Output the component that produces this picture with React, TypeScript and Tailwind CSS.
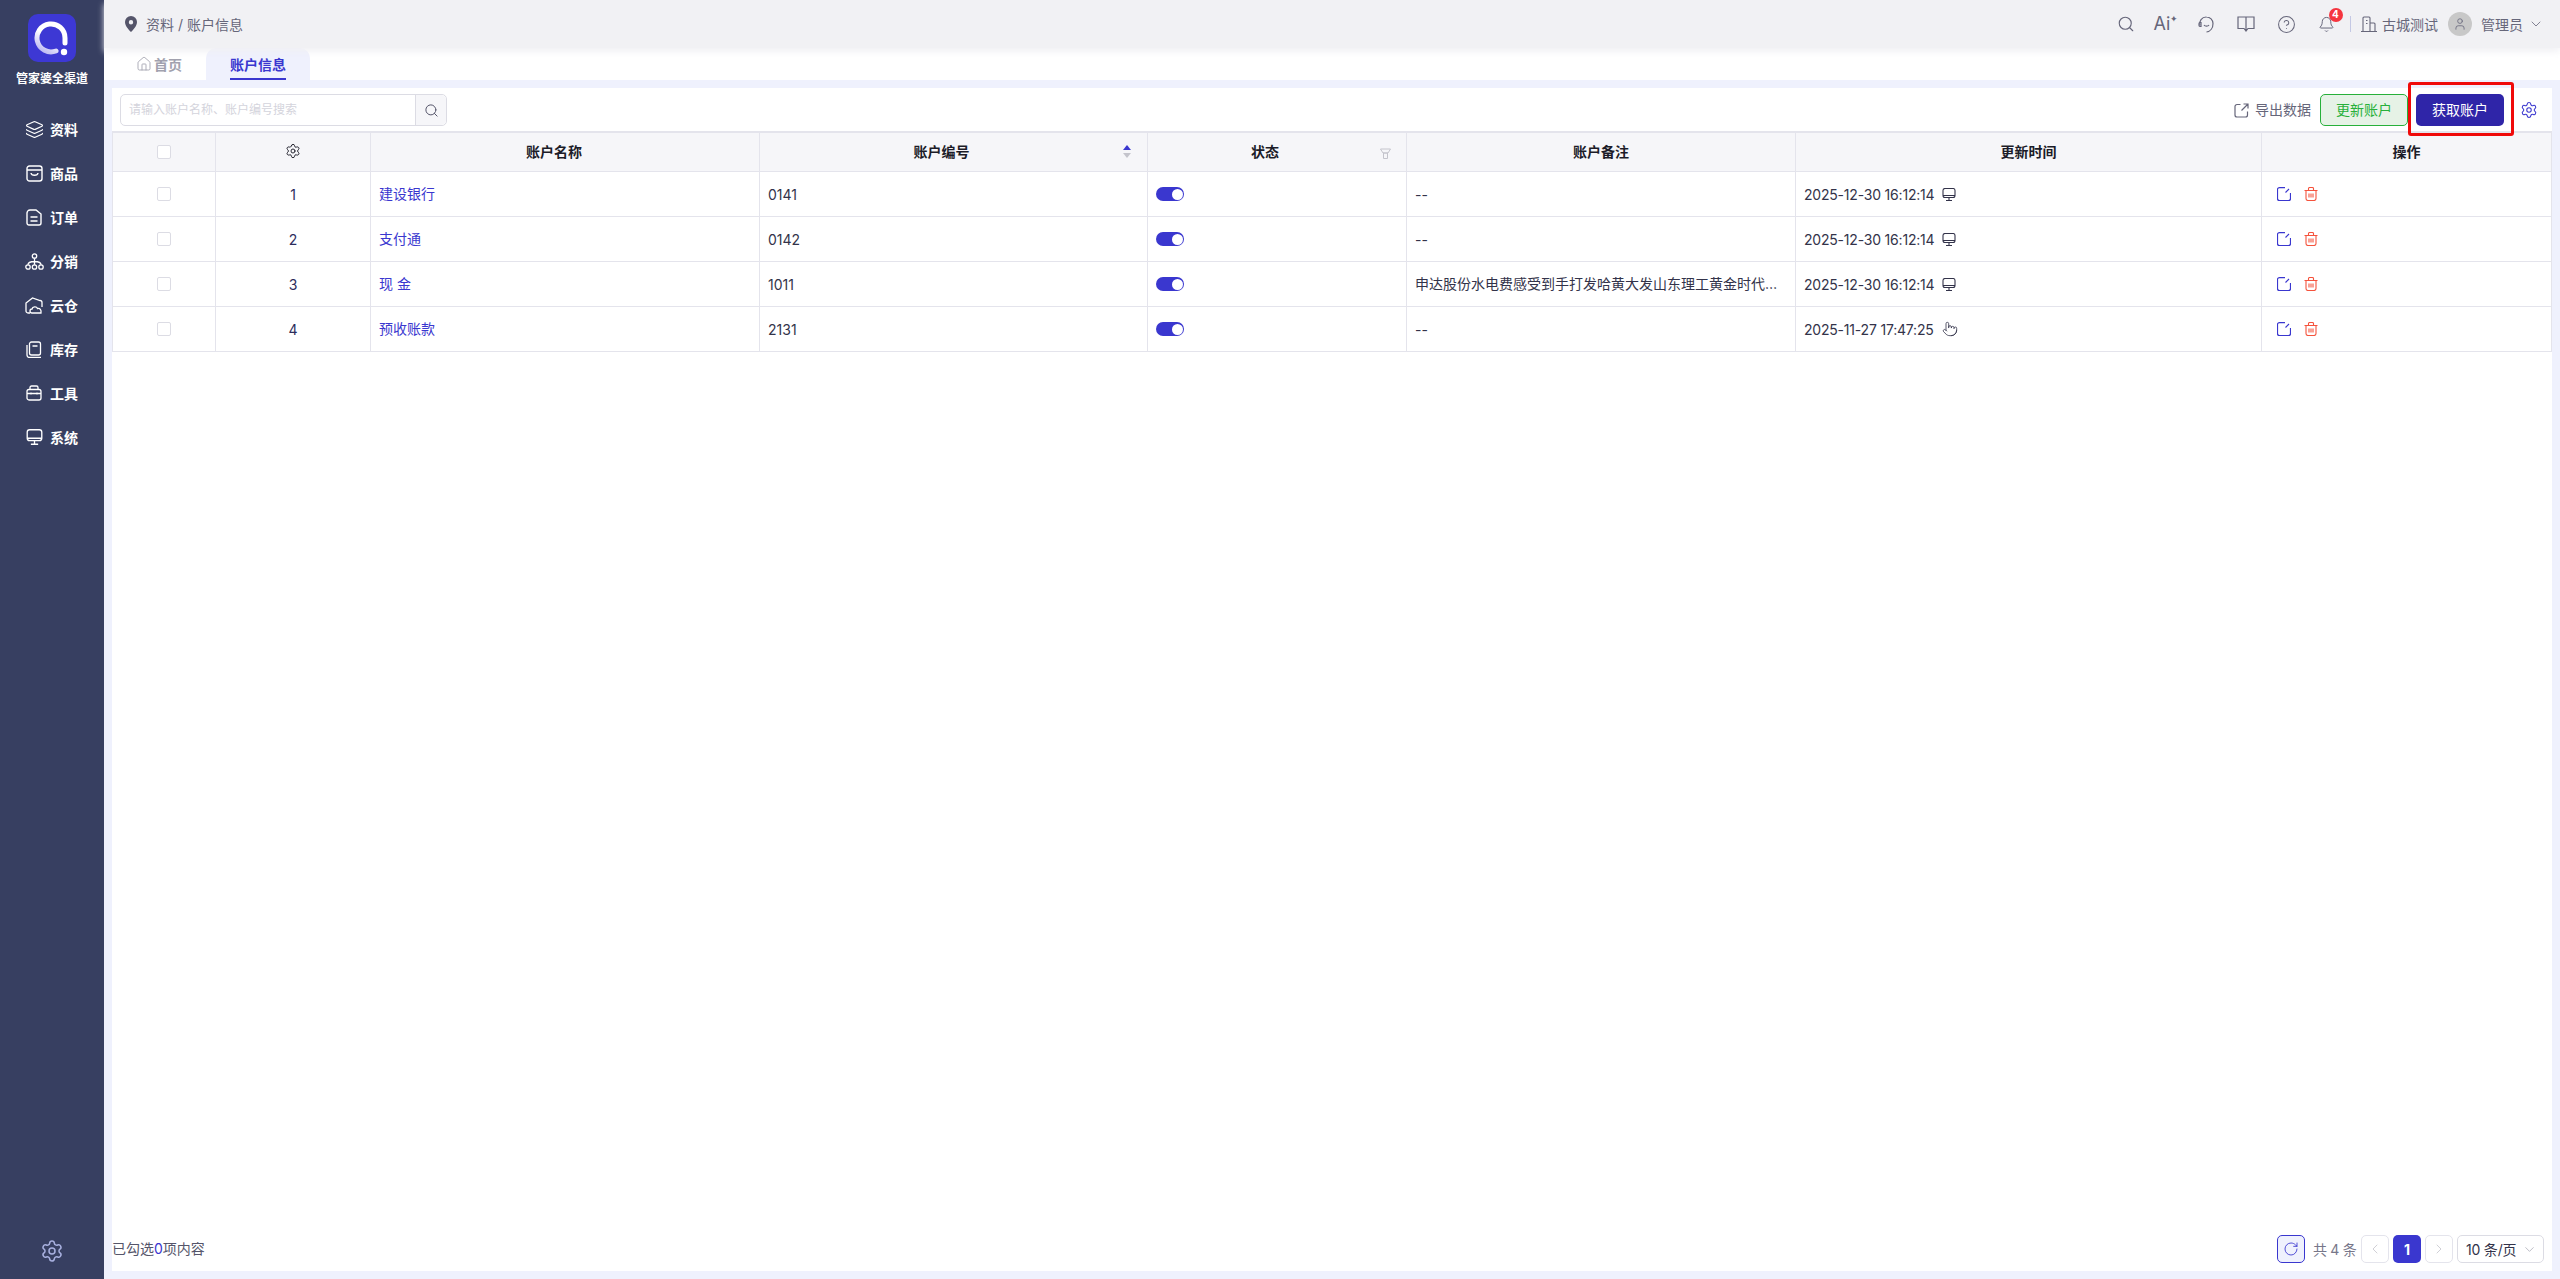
import {
  Bell,
  ChevronDown,
  ChevronLeft,
  ChevronRight,
  CircleHelp,
  House,
  Layers,
  Pointer,
  RotateCw,
  Search,
  Settings,
  User,
} from "lucide-react";

const FONT = "font-['Inter','Noto_Sans_CJK_SC',sans-serif]";

function Shop() {
  return (
    <svg width="17" height="17" viewBox="0 0 17 17" fill="none" stroke="currentColor" strokeWidth="1.4">
      <rect x="1" y="1" width="15" height="15" rx="2.5" />
      <path d="M1 5h15M5 8c.5 3 6.500 3 7 0" />
    </svg>
  );
}

function Doc() {
  return (
    <svg width="16" height="17" viewBox="0 0 16 17" fill="none" stroke="currentColor" strokeWidth="1.4">
      <path d="M4 1h6l5 4v9a2 2 0 0 1-2 2H3a2 2 0 0 1-2-2V4a3 3 0 0 1 3-3z" />
      <path d="M4.500 8h7M4.500 12h7" />
    </svg>
  );
}

function Branches() {
  return (
    <svg width="19" height="17" viewBox="0 0 19 17" fill="none" stroke="currentColor" strokeWidth="1.300">
      <circle cx="9.500" cy="3" r="2.200" />
      <circle cx="3" cy="14" r="2.200" />
      <circle cx="9.500" cy="14" r="2.200" />
      <circle cx="16" cy="14" r="2.200" />
      <path d="M9.500 5.200v6.600M3 11.800c0-3 3-3.300 6.500-3.300s6.500.3 6.500 3.300" />
    </svg>
  );
}

function CloudHouse() {
  return (
    <svg width="18" height="17" viewBox="0 0 18 17" fill="none" stroke="currentColor" strokeWidth="1.300">
      <path d="M5 16H3a2 2 0 0 1-2-2V6l6.500-5L15 3.500a2 2 0 0 1 2 2V10" />
      <path d="M7 16a2 2 0 0 1 0-4c.5-2.500 4.500-3 5.500-.5 2.500-.5 4 1.500 3.500 4.500z" />
    </svg>
  );
}

function Stock() {
  return (
    <svg width="16" height="17" viewBox="0 0 16 17" fill="none" stroke="currentColor" strokeWidth="1.300">
      <rect x="3.500" y="1" width="11" height="13" rx="2" />
      <path d="M6.500 5h5M1 4v10a2.500 2.500 0 0 0 2.500 2.500H15" />
    </svg>
  );
}

function Toolbox() {
  return (
    <svg width="16" height="16" viewBox="0 0 16 16" fill="none" stroke="currentColor" strokeWidth="1.300">
      <rect x="1" y="4.500" width="14" height="10.500" rx="2" />
      <path d="M4 4.500V2.500A1.500 1.500 0 0 1 5.500 1h5A1.500 1.500 0 0 1 12 2.500v2M1 8.500h14M5 7.500v2M11 7.500v2" />
    </svg>
  );
}

function Screen({ w, h }: { w: number; h: number }) {
  return (
    <svg width={w} height={h} viewBox="0 0 14 13" fill="none" stroke="currentColor" strokeWidth="1.100">
      <rect x="1" y=".5" width="12" height="9" rx="2" />
      <path d="M1 7.500h12M7 9.500v3M4 12.500h6" />
    </svg>
  );
}

function HeadsetSmile() {
  return (
    <svg width="17" height="17" viewBox="0 0 17 17" fill="none" stroke="currentColor" strokeWidth="1.200">
      <path d="M2 9.500A6.500 6.500 0 0 1 8.500 1 6.500 6.500 0 0 1 15 7.500c0 4.500-2.500 8-6.500 8.500" />
      <path d="M2 6.500h1v4H2a1.200 1.200 0 0 1-1-1.200V7.700A1.200 1.200 0 0 1 2 6.500zM6 9c1 1.500 4 1.500 5 0" />
    </svg>
  );
}

function Book() {
  return (
    <svg width="18" height="16" viewBox="0 0 18 16" fill="none" stroke="currentColor" strokeWidth="1.200">
      <path d="M1 1h16v11.500h-6L9 15l-2-2.500H1zM9 1v14" />
    </svg>
  );
}

function Building() {
  return (
    <svg width="16" height="16" viewBox="0 0 16 16" fill="none" stroke="currentColor" strokeWidth="1.100">
      <path d="M0 15.500h16M2 15.500V2a1 1 0 0 1 1-1h5a1 1 0 0 1 1 1v13.500M9 7h4a1 1 0 0 1 1 1v7.500M5 4.500h1.500M5 7.500h1.500" />
    </svg>
  );
}

function Funnel() {
  return (
    <svg width="11" height="11" viewBox="0 0 11 11" fill="none" stroke="#c4c4cc" strokeWidth="1">
      <path d="M.5 1h10L8 5H3zM3 5h5M3.500 5v5.500h4V5" />
    </svg>
  );
}

function Export() {
  return (
    <svg width="15" height="15" viewBox="0 0 15 15" fill="none" stroke="currentColor" strokeWidth="1.200">
      <path d="M6.500 1.500H3a2 2 0 0 0-2 2V12a2 2 0 0 0 2 2h8.500a2 2 0 0 0 2-2V8.500M9.500 1h4.500v4.500M14 1L7.500 7.500" />
    </svg>
  );
}

function Edit() {
  return (
    <svg width="14" height="14" viewBox="0 0 14 14" fill="none" stroke="#3a37cf" strokeWidth="1.200">
      <path d="M8 .6H2.500a2 2 0 0 0-2 2v9a2 2 0 0 0 2 2h9a2 2 0 0 0 2-2V6M8.500 5.500l3.500-3.500" />
    </svg>
  );
}

function Trash() {
  return (
    <svg width="14" height="14" viewBox="0 0 14 14" fill="none" stroke="#f5533d" strokeWidth="1.100">
      <path d="M.5 3.500h13M4.500 3.500V1.500a1 1 0 0 1 1-1h3a1 1 0 0 1 1 1v2M2 3.500v8a2 2 0 0 0 2 2h6a2 2 0 0 0 2-2v-8M5 6.500v4M7 6.500v4M9 6.500v4" />
    </svg>
  );
}

const nav = [
  { label: "资料", icon: <Layers size={19} strokeWidth={1.5} /> },
  { label: "商品", icon: <Shop /> },
  { label: "订单", icon: <Doc /> },
  { label: "分销", icon: <Branches /> },
  { label: "云仓", icon: <CloudHouse /> },
  { label: "库存", icon: <Stock /> },
  { label: "工具", icon: <Toolbox /> },
  { label: "系统", icon: <Screen w={17} h={16} /> },
];

const rows = [
  { no: 1, name: "建设银行", code: "0141", note: "--", time: "2025-12-30 16:12:14", hand: false },
  { no: 2, name: "支付通", code: "0142", note: "--", time: "2025-12-30 16:12:14", hand: false },
  {
    no: 3,
    name: "现 金",
    code: "1011",
    note: "申达股份水电费感受到手打发哈黄大发山东理工黄金时代发哈黄金时代",
    time: "2025-12-30 16:12:14",
    hand: false,
  },
  { no: 4, name: "预收账款", code: "2131", note: "--", time: "2025-11-27 17:47:25", hand: true },
];

const cols = "grid-cols-[103px_155px_389px_388px_259px_389px_466px_290px]";

function Check() {
  return <div className="h-[14px] w-[14px] rounded-[2px] border border-[#dcdce4] bg-white" />;
}

function Sidebar() {
  return (
    <aside className="flex h-full w-[104px] shrink-0 flex-col items-center bg-[#373f61] text-white">
      <div className="mt-[14px] flex h-[48px] w-[48px] items-center justify-center rounded-[10px] bg-[#3d38d4]">
        <svg width="36" height="36" viewBox="0 0 36 36" fill="none">
          <defs>
            <linearGradient id="q" x1="0" y1="1" x2="0.6" y2="0">
              <stop offset="0" stopColor="#b3aef0" />
              <stop offset="0.6" stopColor="#ffffff" />
            </linearGradient>
          </defs>
          <path d="M31 23V18A14 14 0 1 0 22 31" stroke="url(#q)" strokeWidth="5" strokeLinecap="round" />
          <circle cx="30" cy="32" r="3.200" fill="#fff" />
        </svg>
      </div>
      <div className="mt-[8px] text-[12px] leading-[18px] font-bold">管家婆全渠道</div>
      <nav className="mt-[19px] flex w-full flex-col">
        {nav.map((n) => (
          <div key={n.label} className="flex h-[44px] items-center">
            <div className="flex w-[50px] justify-center pl-[18px]">{n.icon}</div>
            <span className="text-[14px] font-bold">{n.label}</span>
          </div>
        ))}
      </nav>
      <div className="mt-auto mb-[16px] text-[#a8b0df]">
        <Settings size={24} strokeWidth={1.5} />
      </div>
    </aside>
  );
}

function TopIcon({ children }: { children: React.ReactNode }) {
  return <div className="flex w-[40px] justify-center">{children}</div>;
}

function Topbar() {
  return (
    <header className="relative z-10 flex h-[48px] shrink-0 items-center bg-[#f1f1f4] pr-[16px] pl-[20px] text-[14px] text-[#66667a] shadow-[0_4px_6px_rgba(241,241,244,0.9)]">
      <svg width="14" height="16" viewBox="0 0 14 16">
        <path
          fillRule="evenodd"
          d="M7 0a6 6 0 0 1 6 6c0 4-4 8-6 10-2-2-6-6-6-10a6 6 0 0 1 6-6zm0 4a2.200 2.200 0 1 0 0 4.400A2.200 2.200 0 0 0 7 4z"
          fill="#55556a"
        />
      </svg>
      <span className="ml-[8px]">资料 / 账户信息</span>
      <div className="ml-auto flex items-center">
        <TopIcon>
          <Search size={18} strokeWidth={1.5} />
        </TopIcon>
        <TopIcon>
          <span className="flex items-start text-[18px] leading-[20px]">
            Ai<span className="text-[9px] leading-[10px]">✦</span>
          </span>
        </TopIcon>
        <TopIcon>
          <HeadsetSmile />
        </TopIcon>
        <TopIcon>
          <Book />
        </TopIcon>
        <TopIcon>
          <CircleHelp size={19} strokeWidth={1.3} />
        </TopIcon>
        <TopIcon>
          <div className="relative">
            <Bell size={17} strokeWidth={1.4} />
            <span className="absolute -top-[8px] -right-[8px] flex h-[14px] w-[14px] items-center justify-center rounded-full bg-[#f5353f] text-[10px] font-bold text-white">
              4
            </span>
          </div>
        </TopIcon>
        <div className="mr-[10px] ml-[4px] h-[16px] w-px bg-[#c4c8e4]" />
        <Building />
        <span className="ml-[5px]">古城测试</span>
        <div className="ml-[10px] flex h-[24px] w-[24px] items-center justify-center rounded-full bg-[#c8c8c8]">
          <User size={14} strokeWidth={1.4} />
        </div>
        <span className="ml-[9px]">管理员</span>
        <ChevronDown size={16} strokeWidth={1.2} className="ml-[5px]" />
      </div>
    </header>
  );
}

function Tabs() {
  return (
    <div className="flex h-[32px] shrink-0 items-stretch bg-white pl-[32px] text-[14px] font-bold">
      <div className="flex w-[70px] items-center gap-[2px] text-[#a1a1ae]">
        <House size={16} strokeWidth={1.3} />
        首页
      </div>
      <div className="relative flex w-[104px] items-center justify-center rounded-t-[10px] bg-[#eff1fd] text-[#3a37cf]">
        账户信息
        <span className="absolute bottom-0 left-[24px] h-[2px] w-[56px] bg-[#3a37cf]" />
      </div>
    </div>
  );
}

function Toolbar() {
  return (
    <div className="flex h-[43px] shrink-0 items-start pt-[6px]">
      <div className="ml-[8px] flex h-[32px] w-[327px] rounded-[5px] border border-[#dcdce4]">
        <div className="flex flex-1 items-center pl-[8px] text-[12px] text-[#d4d4dc]">
          请输入账户名称、账户编号搜索
        </div>
        <div className="flex w-[31px] items-center justify-center rounded-r-[5px] border-l border-[#dcdce4] bg-[#f6f6f9] text-[#55556a]">
          <Search size={15} strokeWidth={1.6} />
        </div>
      </div>
      <div className="ml-auto flex items-center pr-[14px]">
        <div className="flex h-[32px] items-center gap-[6px] text-[14px] text-[#66667a]">
          <Export />
          <span className="pb-[2px]">导出数据</span>
        </div>
        <button className="ml-[9px] h-[32px] w-[88px] rounded-[5px] border border-[#27b03a] bg-[#e6f2e6] pb-[2px] text-[14px] text-[#27b03a]">
          更新账户
        </button>
        <div className="relative ml-[8px]">
          <button className="h-[32px] w-[88px] rounded-[5px] bg-[#2f25a8] pb-[2px] text-[14px] text-white">
            获取账户
          </button>
          <span className="absolute -top-[12px] -right-[10px] -bottom-[10px] -left-[8px] rounded-[3px] border-[3px] border-[#f00a0a]" />
        </div>
        <Settings size={18} strokeWidth={1.4} className="ml-[16px] text-[#3a37cf]" />
      </div>
    </div>
  );
}

function TableHeader() {
  const th = "flex items-center justify-center border-r border-[#e4e4ec]";
  return (
    <div className={`grid h-[41px] ${cols} border-t-2 border-b border-l border-[#e4e4ec] bg-[#f6f6f9] text-[14px] font-bold text-[#1c1c28]`}>
      <div className={th}>
        <Check />
      </div>
      <div className={`${th} pb-[2px]`}>
        <Settings size={16} strokeWidth={1.4} />
      </div>
      <div className={`${th} pr-[22px] pb-[2px]`}>账户名称</div>
      <div className={`${th} relative pr-[24px] pb-[2px]`}>
        账户编号
        <svg width="8" height="13" viewBox="0 0 8 13" className="absolute top-[12px] right-[16px]">
          <path d="M4 0l4 5H0z" fill="#3a37cf" />
          <path d="M4 13L0 8h8z" fill="#c4c4cc" />
        </svg>
      </div>
      <div className={`${th} relative pr-[24px] pb-[2px]`}>
        状态
        <span className="absolute top-[15px] right-[15px]">
          <Funnel />
        </span>
      </div>
      <div className={`${th} pb-[2px]`}>账户备注</div>
      <div className={`${th} pb-[2px]`}>更新时间</div>
      <div className={`${th} pb-[2px]`}>操作</div>
    </div>
  );
}

function Row({ r }: { r: (typeof rows)[number] }) {
  const td = "flex min-w-0 items-center border-r border-[#e4e4ec] px-[8px]";
  return (
    <div className={`grid h-[45px] ${cols} border-b border-l border-[#e4e4ec] text-[14px] text-[#33334a]`}>
      <div className={`${td} justify-center`}>
        <Check />
      </div>
      <div className={`${td} justify-center text-[#2c2c5c]`}>{r.no}</div>
      <div className={`${td} whitespace-pre pb-[2px] text-[#3a37cf]`}>{r.name}</div>
      <div className={td}>{r.code}</div>
      <div className={td}>
        <div className="flex h-[14px] w-[28px] items-center justify-end rounded-full bg-[#3a37cf] pr-[1px]">
          <span className="h-[11px] w-[11px] rounded-full bg-white" />
        </div>
      </div>
      <div className={td}>
        <span className={r.note === "--" ? "truncate" : "truncate pb-[2px]"}>{r.note}</span>
      </div>
      <div className={`${td} gap-[8px]`}>
        <span className="tracking-[-0.2px]">{r.time}</span>
        {r.hand ? <Pointer size={16} strokeWidth={1.2} /> : <Screen w={14} h={13} />}
      </div>
      <div className={`${td} gap-[13px] pl-[15px]`}>
        <Edit />
        <Trash />
      </div>
    </div>
  );
}

function Footer() {
  const box = "flex h-[28px] w-[28px] items-center justify-center rounded-[5px] border border-[#e4e4ec] text-[#c4c4cc]";
  return (
    <div className="mt-auto flex h-[36px] shrink-0 items-start text-[14px] text-[#55556a]">
      <div className="pt-[4px] leading-[20px]">
        已勾选<span className="text-[#3a37cf]">0</span>项内容
      </div>
      <div className="ml-auto flex items-center pr-[8px]">
        <div className="flex h-[28px] w-[28px] items-center justify-center rounded-[5px] border border-[#3a37cf] bg-[#eff1fd] text-[#3a37cf]">
          <RotateCw size={16} strokeWidth={1.3} />
        </div>
        <span className="ml-[8px] w-[48px] whitespace-pre tracking-[-0.3px] text-[#77778a]">共 4 条</span>
        <div className={box}>
          <ChevronLeft size={16} strokeWidth={1.2} />
        </div>
        <div className="mx-[4px] flex h-[28px] w-[28px] items-center justify-center rounded-[5px] bg-[#3a37cf] font-bold text-white">
          1
        </div>
        <div className={box}>
          <ChevronRight size={16} strokeWidth={1.2} />
        </div>
        <div className="ml-[4px] flex h-[28px] w-[87px] items-center justify-between rounded-[5px] border border-[#dcdce4] pr-[6px] pl-[8px] text-[#33334a]">
          <span className="whitespace-pre tracking-[-0.2px]">10 条/页</span>
          <ChevronDown size={15} strokeWidth={1.1} className="text-[#a1a1ae]" />
        </div>
      </div>
    </div>
  );
}

export default function App() {
  return (
    <div className={`flex h-screen w-full overflow-hidden ${FONT}`}>
      <Sidebar />
      <div className="flex min-w-0 flex-1 flex-col bg-[#eff1fd]">
        <Topbar />
        <Tabs />
        <div className="m-[8px] flex min-h-0 flex-1 flex-col bg-white">
          <Toolbar />
          <TableHeader />
          {rows.map((r) => (
            <Row key={r.no} r={r} />
          ))}
          <Footer />
        </div>
      </div>
    </div>
  );
}
